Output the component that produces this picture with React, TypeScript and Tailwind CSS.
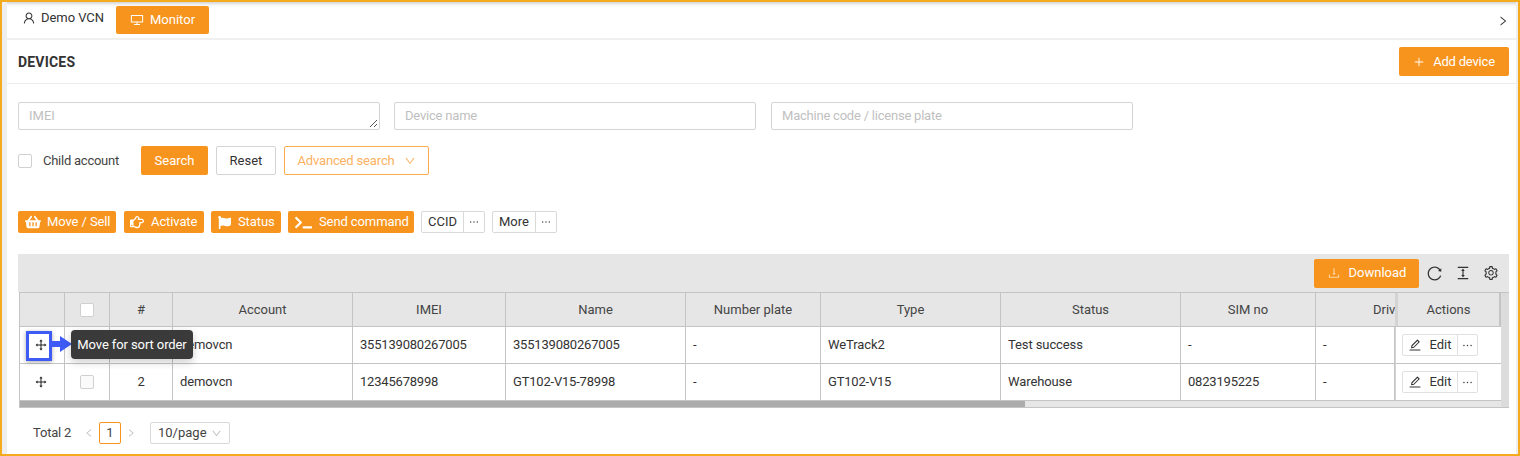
import type { ReactNode } from "react";
import {
  AiOutlineColumnHeight,
  AiOutlineDesktop,
  AiOutlineDown,
  AiOutlineDownload,
  AiOutlineDrag,
  AiOutlineEdit,
  AiOutlineEllipsis,
  AiOutlineLeft,
  AiOutlinePlus,
  AiOutlineReload,
  AiOutlineRight,
  AiOutlineSetting,
  AiOutlineUser,
} from "react-icons/ai";
import { FaFlag, FaRegHandPointRight, FaShoppingBasket, FaTerminal } from "react-icons/fa";

const columns = "grid-cols-[45px_45px_63px_180px_153px_180px_135px_180px_180px_135px_79px_107px]";

const rows = [
  ["355139080267005", "355139080267005", "-", "WeTrack2", "Test success", "-", "-"],
  ["12345678998", "GT102-V15-78998", "-", "GT102-V15", "Warehouse", "0823195225", "-"],
];

function OrangeButton({ icon, label, width }: { icon: ReactNode; label: string; width: string }) {
  return (
    <button
      className={`flex h-[22px] items-center gap-[6px] rounded-[2px] bg-[#f7941d] pl-[7px] text-[13px] tracking-[-0.1px] whitespace-nowrap text-white ${width}`}
    >
      {icon}
      {label}
    </button>
  );
}

function SplitButton({ label }: { label: string }) {
  return (
    <div className="flex h-[22px] rounded-[2px] border border-[#d9d9d9] text-[13px] text-[#333]">
      <span className="flex items-center px-[6px]">{label}</span>
      <span className="flex w-[21px] items-center justify-center border-l border-[#d9d9d9]">
        <AiOutlineEllipsis className="text-[12px]" />
      </span>
    </div>
  );
}

function HeaderCell({ children }: { children?: ReactNode }) {
  return (
    <div className="flex items-center justify-center border-r border-[#c4c4c4] bg-[#e6e6e6] text-[13px] text-[#444]">
      {children}
    </div>
  );
}

function Cell({ children, center }: { children?: ReactNode; center?: boolean }) {
  return (
    <div
      className={`flex items-center border-r border-b border-[#c4c4c4] bg-white text-[13px] tracking-[-0.1px] text-[#333] ${
        center ? "justify-center" : "px-[7px]"
      }`}
    >
      {children}
    </div>
  );
}

function Checkbox({ dim }: { dim?: boolean }) {
  return (
    <span
      className={`block h-[14px] w-[14px] rounded-[2px] border border-[#d0d0d0] ${dim ? "bg-[#fafafa]" : "bg-white"}`}
    />
  );
}

export default function App() {
  return (
    <div className="relative h-[456px] w-[1520px] overflow-hidden border-2 border-[#f5ab1e] bg-white font-['Roboto',sans-serif] text-[13px] text-[#333]">
      <div className="flex h-[36px] items-start pl-[5px] pr-[9px] shadow-[inset_0_4px_4px_-3px_rgba(0,0,0,0.25)]">
        <div className="flex h-[28px] w-[109px] items-center gap-[5px] pl-[15px] pt-[4px] tracking-[-0.05px] text-[#333]">
          <AiOutlineUser className="text-[14px]" />
          Demo VCN
        </div>
        <div className="mt-[4px] flex h-[28px] w-[93px] items-center gap-[6px] rounded-[2px] bg-[#f7941d] pl-[14px] text-white">
          <AiOutlineDesktop className="text-[14px]" />
          Monitor
        </div>
        <AiOutlineRight className="mt-[13px] ml-auto text-[12px] text-[#333]" />
      </div>

      <div className="ml-[5px] mr-[2px] border-t-2 border-[#f0f0f0]">
        <div className="flex h-[44px] items-center justify-between border-b border-[#ececec] pl-[11px] pr-[7px]">
          <h1 className="pt-px text-[14px] font-bold tracking-[0.2px] text-[#333]">DEVICES</h1>
          <button className="flex h-[29px] w-[110px] items-center justify-center gap-[8px] rounded-[2px] bg-[#f7941d] text-[13px] tracking-[-0.2px] text-white">
            <AiOutlinePlus className="text-[12px]" />
            Add device
          </button>
        </div>

        <div className="pl-[11px] pr-[7px] pt-[18px]">
          <div className="flex gap-[14px]">
            <div className="relative flex h-[28px] w-[362px] items-center rounded-[2px] border border-[#d4d4d4] px-[10px] text-[#bfbfbf]">
              IMEI
              <svg className="absolute bottom-[1px] right-[1px] h-[9px] w-[9px]" viewBox="0 0 9 9" fill="none" stroke="#555">
                <path d="M1 8 8 1M5 8l3-3" />
              </svg>
            </div>
            <div className="flex h-[28px] w-[362px] items-center rounded-[2px] border border-[#d4d4d4] px-[10px] tracking-[-0.2px] text-[#bfbfbf]">
              Device name
            </div>
            <div className="ml-px flex h-[28px] w-[362px] items-center rounded-[2px] border border-[#d4d4d4] px-[10px] tracking-[-0.22px] text-[#bfbfbf]">
              Machine code / license plate
            </div>
          </div>

          <div className="mt-[16px] flex h-[29px] items-center">
            <Checkbox />
            <span className="ml-[11px] w-[76px] tracking-[-0.25px] whitespace-nowrap text-[#444]">Child account</span>
            <button className="ml-[22px] flex h-[29px] w-[67px] items-center justify-center rounded-[2px] bg-[#f7941d] text-white">
              Search
            </button>
            <button className="ml-[8px] flex h-[29px] w-[60px] items-center justify-center rounded-[2px] border border-[#d4d4d4]">
              Reset
            </button>
            <button className="ml-[8px] flex h-[29px] w-[145px] items-center justify-center gap-[9px] rounded-[2px] border border-[#f9ad4d] tracking-[-0.15px] text-[#fbb15f]">
              Advanced search
              <AiOutlineDown className="text-[12px]" />
            </button>
          </div>

          <div className="mt-[36px] flex items-center gap-[7px]">
            <OrangeButton width="w-[98px]" icon={<FaShoppingBasket className="shrink-0 text-[16px]" />} label="Move / Sell" />
            <div className="ml-px">
              <OrangeButton width="w-[80px]" icon={<FaRegHandPointRight className="ml-[-1px] mr-px shrink-0 text-[14px]" />} label="Activate" />
            </div>
            <OrangeButton width="w-[70px]" icon={<FaFlag className="mr-px shrink-0 text-[13px]" />} label="Status" />
            <OrangeButton width="w-[126px]" icon={<FaTerminal className="mr-px shrink-0 text-[17px]" />} label="Send command" />
            <SplitButton label="CCID" />
            <SplitButton label="More" />
          </div>

          <div className="mt-[21px] flex h-[38px] w-[1491px] items-center justify-end bg-[#e6e6e6] pr-[10px]">
            <button className="flex h-[29px] w-[105px] items-center justify-center gap-[8px] rounded-[2px] bg-[#f7941d] text-white">
              <AiOutlineDownload className="text-[14px] text-[#fdd9a8]" />
              Download
            </button>
            <AiOutlineReload className="ml-[7px] text-[17px] text-[#333]" />
            <AiOutlineColumnHeight className="ml-[12px] text-[16px] text-[#333]" />
            <AiOutlineSetting className="ml-[12px] text-[16px] text-[#333]" />
          </div>

          <div className="relative ml-px w-[1490px] border-y border-l border-[#c4c4c4] bg-[#e6e6e6]">
            <div className={`grid h-[34px] w-[1482px] ${columns} border-b border-[#c4c4c4]`}>
              <HeaderCell />
              <HeaderCell>
                <Checkbox />
              </HeaderCell>
              <HeaderCell>#</HeaderCell>
              <HeaderCell>Account</HeaderCell>
              <HeaderCell>IMEI</HeaderCell>
              <HeaderCell>Name</HeaderCell>
              <HeaderCell>Number plate</HeaderCell>
              <HeaderCell>Type</HeaderCell>
              <HeaderCell>Status</HeaderCell>
              <HeaderCell>SIM no</HeaderCell>
              <div className="overflow-hidden bg-[#e6e6e6] pl-[57px] leading-[33px] whitespace-nowrap text-[#444]">
                Driver
              </div>
              <div className="flex items-center justify-center border-x-[3px] border-l-[#d4d4d4] border-r-[#c4c4c4] bg-[#e6e6e6] text-[#444]">
                Actions
              </div>
            </div>
            {rows.map((row, index) => (
              <div className={`grid h-[37px] w-[1482px] ${columns}`} key={row[0]}>
                <Cell center>
                  <AiOutlineDrag className="-ml-[2px] text-[14px] text-[#222]" />
                </Cell>
                <Cell center>
                  <Checkbox dim />
                </Cell>
                <Cell center>{index + 1}</Cell>
                <Cell>demovcn</Cell>
                {row.map((value, i) => (
                  <Cell key={i}>{/^[\dG]/.test(value) ? <span className="tracking-[-0.2px]">{value}</span> : value}</Cell>
                ))}
                <div className="flex items-center border-x border-b border-[#c4c4c4] border-l-[#d4d4d4] bg-white pl-[6px]">
                  <div className="flex h-[22px] rounded-[2px] border border-[#e0e0e0] text-[#333]">
                    <span className="flex w-[54px] items-center justify-center gap-[7px]">
                      <AiOutlineEdit className="text-[14px]" />
                      Edit
                    </span>
                    <span className="flex w-[20px] items-center justify-center border-l border-[#e0e0e0]">
                      <AiOutlineEllipsis className="text-[13px]" />
                    </span>
                  </div>
                </div>
              </div>
            ))}
            <div className="h-[6px] w-[1005px] bg-[#acacac]" />
            <div className="absolute right-0 top-0 h-full w-[8px] bg-[#dcdcdc]" />

            <div className="absolute left-[6px] top-[38px] h-[30px] w-[26px] border-[3px] border-[#3f5bf6] shadow-[0_1px_4px_rgba(0,0,0,0.35)]" />
            <svg className="absolute left-[31px] top-[43px] h-[16px] w-[21px]" viewBox="0 0 21 16" fill="#3f5bf6">
              <path d="M0 5h9V0l12 8-12 8v-5H0z" />
            </svg>
            <div className="absolute left-[51px] top-[37px] flex h-[29px] w-[122px] items-center justify-center rounded-[4px] bg-[#3a3a3a] text-[13px] tracking-[-0.1px] whitespace-nowrap text-white shadow-[0_3px_8px_rgba(0,0,0,0.2)]">
              Move for sort order
            </div>
          </div>

          <div className="mt-[14px] flex h-[22px] items-center pl-[15px] text-[#444]">
            <span className="w-[38px] tracking-[-0.2px] whitespace-nowrap">Total 2</span>
            <AiOutlineLeft className="ml-[13px] text-[10px] text-[#bfbfbf]" />
            <span className="ml-[5px] flex h-[22px] w-[22px] items-center justify-center rounded-[2px] border border-[#f7941d]">
              1
            </span>
            <AiOutlineRight className="ml-[5px] text-[10px] text-[#bfbfbf]" />
            <span className="ml-[14px] flex h-[22px] w-[80px] items-center justify-between rounded-[2px] border border-[#d9d9d9] px-[7px]">
              10/page
              <AiOutlineDown className="text-[11px] text-[#bfbfbf]" />
            </span>
          </div>
        </div>
      </div>

      <div className="absolute bottom-0 left-0 top-0 w-[5px] bg-[#eeeeee]" />
      <div className="absolute bottom-0 right-0 top-0 w-[2px] bg-[#eeeeee]" />
    </div>
  );
}
